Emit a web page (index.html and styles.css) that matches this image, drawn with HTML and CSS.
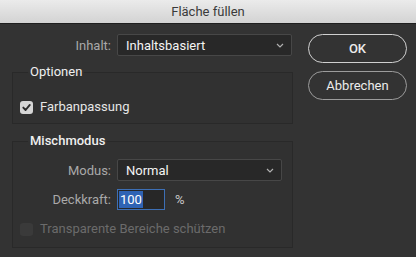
FILE: index.html
```html
<!DOCTYPE html>
<html lang="de">
<head>
    <meta charset="UTF-8">
    <title>Fläche füllen</title>
    <link rel="stylesheet" href="styles.css">
</head>
<body>
<!-- Titelleiste -->
<div class="titlebar">Fläche füllen</div>

<div class="dialog">
    <!-- Linke Spalte: Einstellungen -->
    <div class="main">
        <div class="row row-top">
            <span class="label">Inhalt:</span>
            <div class="select">
                <span>Inhaltsbasiert</span>
                <svg class="chevron" width="8" height="5" viewBox="0 0 8 5"><polyline points="1,1 4,4 7,1" fill="none" stroke="#b0b0b0" stroke-width="1.2"/></svg>
            </div>
        </div>

        <fieldset class="group group-options">
            <legend>Optionen</legend>
            <label class="check">
                <span class="box checked">
                    <svg width="13" height="13" viewBox="0 0 13 13"><polyline points="3.3,6.6 5.6,9 9.8,3.9" fill="none" stroke="#2b2b2b" stroke-width="1.9" stroke-linecap="round" stroke-linejoin="round"/></svg>
                </span>
                Farbanpassung
            </label>
        </fieldset>

        <fieldset class="group group-mode">
            <legend class="strong">Mischmodus</legend>
            <div class="row">
                <span class="label">Modus:</span>
                <div class="select">
                    <span>Normal</span>
                    <svg class="chevron" width="8" height="5" viewBox="0 0 8 5"><polyline points="1,1 4,4 7,1" fill="none" stroke="#b0b0b0" stroke-width="1.2"/></svg>
                </div>
            </div>
            <div class="row row-opacity">
                <span class="label">Deckkraft:</span>
                <div class="field">
                    <div class="input"><span class="selected">100</span></div>
                    <span class="unit">%</span>
                </div>
            </div>
            <label class="check disabled">
                <span class="box"></span>
                Transparente Bereiche schützen
            </label>
        </fieldset>
    </div>

    <!-- Rechte Spalte: Buttons -->
    <div class="buttons">
        <button class="btn btn-default">OK</button>
        <button class="btn">Abbrechen</button>
    </div>
</div>
</body>
</html>
```

FILE: styles.css
```css
/* Grundeinstellungen */
* { box-sizing: border-box; margin: 0; padding: 0; }
body {
    font-family: Roboto, "Liberation Sans", sans-serif;
    font-size: 13px;
    background: #333333;
    color: #e6e6e6;
    width: 416px;
    height: 257px;
    overflow: hidden;
}

/* Titelleiste */
.titlebar {
    height: 24px;
    line-height: 23px;
    text-align: center;
    color: #3a3a3a;
    background: linear-gradient(#ebebeb, #d3d3d3);
    border-bottom: 1px solid #1f1f1f;
}

/* Dialog-Layout */
.dialog {
    display: flex;
    padding: 10px 9px 0 12px;
}
.main { width: 281px; }
.buttons {
    width: 99px;
    margin-left: 15px;
    display: flex;
    flex-direction: column;
    gap: 8px;
}

/* Zeilen mit Beschriftung */
.row {
    display: grid;
    grid-template-columns: 91px 165px;
    column-gap: 6px;
    align-items: center;
}
.row-top { grid-template-columns: 99px 175px; }
.row-opacity { margin-top: 8px; }
.label {
    text-align: right;
    color: #a9a9a9;
}

/* Auswahlfelder */
.select {
    height: 22px;
    display: flex;
    align-items: center;
    justify-content: space-between;
    padding: 0 7px 0 8px;
    background: #282828;
    border: 1px solid #474747;
    border-radius: 2px;
    color: #f4f4f4;
}
.chevron { margin-top: 1px; }

/* Eingabefeld Deckkraft */
.field {
    display: flex;
    align-items: center;
    gap: 10px;
}
.input {
    width: 48px;
    height: 21px;
    padding: 0 1px;
    display: flex;
    align-items: center;
    background: #272727;
    border: 1px solid #3d6fb5;
}
.input .selected {
    background: #2f63b4;
    color: #fff;
    line-height: 17px;
    padding: 0 1px;
}
.unit { color: #c8c8c8; }

/* Gruppen */
.group {
    border: 1px solid #292929;
    background: #313131;
    padding: 0 7px;
}
.group legend {
    margin-left: 8px;
    padding: 0 2px;
    line-height: 16px;
    color: #efefef;
}
.group legend.strong { font-weight: 500; }
.group-options {
    margin-top: 8px;
    padding-top: 19px;
    padding-bottom: 8px;
}
.group-mode {
    margin-top: 9px;
    padding-top: 10px;
    padding-bottom: 10px;
}
.group-mode .check { margin-top: 11px; }

/* Checkboxen */
.check {
    display: flex;
    align-items: center;
    gap: 7px;
    line-height: 16px;
    color: #e6e6e6;
}
.box {
    width: 13px;
    height: 13px;
    border-radius: 3px;
    background: #3a3a3a;
    display: flex;
}
.box.checked { background: #d6d6d6; }
.check.disabled { color: #6b6b6b; }

/* Buttons */
.btn {
    height: 29px;
    font-family: inherit;
    font-size: 13px;
    color: #ececec;
    background: #333333;
    border: 1.5px solid #9c9c9c;
    border-radius: 15px;
}
.btn-default {
    font-weight: 500;
    border-color: #d0d0d0;
}
```
